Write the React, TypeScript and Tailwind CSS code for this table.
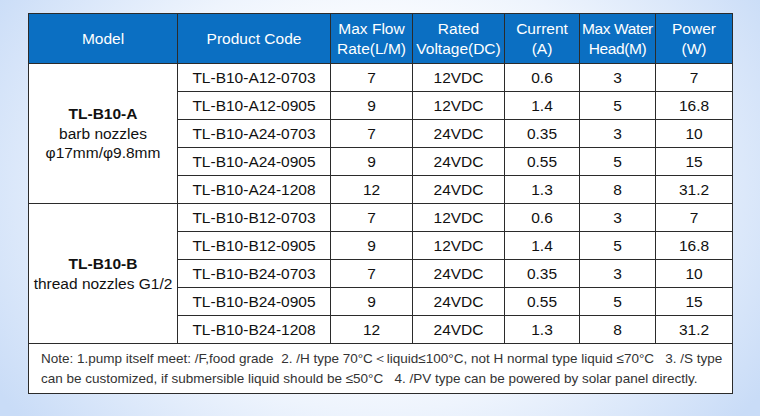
const rows = [
  { code: "TL-B10-A12-0703", flow: "7", volt: "12VDC", cur: "0.6", head: "3", power: "7" },
  { code: "TL-B10-A12-0905", flow: "9", volt: "12VDC", cur: "1.4", head: "5", power: "16.8" },
  { code: "TL-B10-A24-0703", flow: "7", volt: "24VDC", cur: "0.35", head: "3", power: "10" },
  { code: "TL-B10-A24-0905", flow: "9", volt: "24VDC", cur: "0.55", head: "5", power: "15" },
  { code: "TL-B10-A24-1208", flow: "12", volt: "24VDC", cur: "1.3", head: "8", power: "31.2" },
  { code: "TL-B10-B12-0703", flow: "7", volt: "12VDC", cur: "0.6", head: "3", power: "7" },
  { code: "TL-B10-B12-0905", flow: "9", volt: "12VDC", cur: "1.4", head: "5", power: "16.8" },
  { code: "TL-B10-B24-0703", flow: "7", volt: "24VDC", cur: "0.35", head: "3", power: "10" },
  { code: "TL-B10-B24-0905", flow: "9", volt: "24VDC", cur: "0.55", head: "5", power: "15" },
  { code: "TL-B10-B24-1208", flow: "12", volt: "24VDC", cur: "1.3", head: "8", power: "31.2" },
]

const cell = "border border-[#2b2b2b] text-center align-middle p-0"

export default function App() {
  return (
    <div
      className="w-[760px] h-[416px] pt-[13px] pl-[28px] font-['Liberation_Sans',Arial,sans-serif] bg-[radial-gradient(ellipse_60%_90%_at_50%_45%,#ffffff_35%,#eef4fd_60%,#c9dcf7_100%)]"
    >
      <table className="w-[704px] border-collapse bg-white text-[15.5px] text-[#111] table-fixed">
        <colgroup>
          <col className="w-[149px]" />
          <col className="w-[153px]" />
          <col className="w-[82px]" />
          <col className="w-[92px]" />
          <col className="w-[75px]" />
          <col className="w-[76px]" />
          <col className="w-[77px]" />
        </colgroup>
        <thead>
          <tr className="h-[50px] bg-[#0b6fc2] text-white leading-[20px]">
            <th className={`${cell} font-normal`}>Model</th>
            <th className={`${cell} font-normal`}>Product Code</th>
            <th className={`${cell} font-normal`}>Max Flow<br />Rate(L/M)</th>
            <th className={`${cell} font-normal`}>Rated<br />Voltage(DC)</th>
            <th className={`${cell} font-normal`}>Current<br />(A)</th>
            <th className={`${cell} font-normal tracking-[-0.4px] whitespace-nowrap`}>Max Water<br />Head(M)</th>
            <th className={`${cell} font-normal`}>Power<br />(W)</th>
          </tr>
        </thead>
        <tbody>
          {rows.map((r, i) => (
            <tr key={r.code} className="h-[28px]">
              {i === 0 && (
                <td rowSpan={5} className={`${cell} leading-[19.5px]`}>
                  <div className="font-bold">TL-B10-A</div>
                  <div>barb nozzles</div>
                  <div>φ17mm/φ9.8mm</div>
                </td>
              )}
              {i === 5 && (
                <td rowSpan={5} className={`${cell} leading-[19.5px]`}>
                  <div className="font-bold">TL-B10-B</div>
                  <div>thread nozzles G1/2</div>
                </td>
              )}
              <td className={cell}>{r.code}</td>
              <td className={cell}>{r.flow}</td>
              <td className={cell}>{r.volt}</td>
              <td className={cell}>{r.cur}</td>
              <td className={cell}>{r.head}</td>
              <td className={cell}>{r.power}</td>
            </tr>
          ))}
          <tr className="h-[50px]">
            <td colSpan={7} className="border border-[#2b2b2b] text-left align-middle pl-[12px] pr-[4px] text-[13.5px] leading-[20px] text-[#333]">
              Note: 1.pump itself meet: /F,food grade&nbsp; 2. /H type 70°C＜liquid≤100°C, not H normal type liquid ≤70°C&nbsp;&nbsp; 3. /S type
              <br />
              can be customized, if submersible liquid should be ≤50°C&nbsp;&nbsp; 4. /PV type can be powered by solar panel directly.
            </td>
          </tr>
        </tbody>
      </table>
    </div>
  )
}
